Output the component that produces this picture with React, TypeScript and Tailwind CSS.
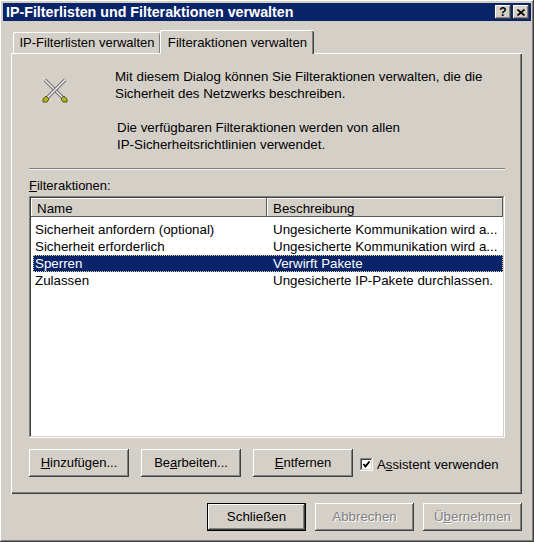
import React from 'react';

const raised = 'shadow-[inset_-1px_-1px_0_#404040,inset_1px_1px_0_#ffffff,inset_-2px_-2px_0_#808080,inset_2px_2px_0_#d4d0c8]';
const sunken = 'shadow-[inset_-1px_-1px_0_#ffffff,inset_1px_1px_0_#808080,inset_-2px_-2px_0_#d4d0c8,inset_2px_2px_0_#404040]';
const headerCell = 'shadow-[inset_-1px_-1px_0_#5a5a5a,inset_1px_1px_0_#ffffff]';

function SwordsIcon() {
  return (
    <svg width="32" height="32" viewBox="0 0 32 32" className="block">
      <g fill="none">
        <path d="M5 2 L23 20" stroke="#6b6b6b" strokeWidth="3.4" />
        <path d="M5 2 L23 20" stroke="#f4f4f4" strokeWidth="1.4" />
        <path d="M25 2 L7 20" stroke="#6b6b6b" strokeWidth="3.4" />
        <path d="M25 2 L7 20" stroke="#f4f4f4" strokeWidth="1.4" />
      </g>
      <path d="M6 18 L9 21 L7 24 L3 24 L3 21 Z" fill="#b4b41e" stroke="#3c3c10" strokeWidth="0.8" />
      <path d="M24 18 L21 21 L23 24 L27 24 L27 21 Z" fill="#b4b41e" stroke="#3c3c10" strokeWidth="0.8" />
      <path d="M0 21 H1 M11 22 H12 M18 22 H19 M29 21 H30" stroke="#e8e4a8" strokeWidth="1" />
    </svg>
  );
}

function Btn({ children, disabled, isDefault, w = 'w-[100px]', h = 'h-[28px]', text = 'text-[13px]' }: { children: React.ReactNode; disabled?: boolean; isDefault?: boolean; w?: string; h?: string; text?: string }) {
  return (
    <button
      className={`${w} ${h} flex items-center justify-center bg-[#d4d0c8] ${text} ${raised} ${disabled ? 'text-[#808080] [text-shadow:1px_1px_0_#ffffff]' : 'text-black'} ${isDefault ? 'border border-black' : ''}`}
    >
      <span>{children}</span>
    </button>
  );
}

function Row({ name, desc, selected }: { name: string; desc: string; selected?: boolean }) {
  return (
    <div className={`flex h-[17px] items-center leading-none ${selected ? 'bg-[#0a246a] text-white outline-1 -outline-offset-1 outline-dotted outline-[#d4d0a0]' : 'text-black'}`}>
      <div className="w-[240px] pl-[2px]">{name}</div>
      <div className="whitespace-nowrap">{desc}</div>
    </div>
  );
}

export default function App() {
  return (
    <div className={`flex h-[542px] w-[534px] flex-col bg-[#d4d0c8] p-[3px] font-['Liberation_Sans',Arial,sans-serif] text-[13px] text-black ${raised}`}>
      <div className="flex h-[18px] shrink-0 items-center justify-between bg-[#0a246a] pl-[3px] pr-[2px]">
        <span className="whitespace-nowrap pt-px text-[14.25px] font-bold text-white">IP-Filterlisten und Filteraktionen verwalten</span>
        <div className="flex">
          <div className={`flex h-[14px] w-[16px] items-center justify-center bg-[#d4d0c8] text-[12px] font-bold leading-none ${raised}`}>?</div>
          <div className={`ml-[2px] flex h-[14px] w-[16px] items-center justify-center bg-[#d4d0c8] ${raised}`}>
            <svg width="8" height="7" viewBox="0 0 8 7"><path d="M0.5 0.5 L7.5 6.5 M7.5 0.5 L0.5 6.5" stroke="#000" strokeWidth="1.6" /></svg>
          </div>
        </div>
      </div>

      <div className="ml-[10px] mt-[9px] flex h-[23px] shrink-0 items-end">
        <div className="flex h-[21px] w-[147px] items-center justify-center rounded-t-[2px] border-l border-t border-white shadow-[inset_-1px_0_0_#808080] whitespace-nowrap">IP-Filterlisten verwalten</div>
        <div className="relative z-10 -mb-px flex h-[24px] w-[154px] items-center justify-center rounded-t-[2px] border-l border-t border-white bg-[#d4d0c8] text-[13.2px] shadow-[inset_-1px_0_0_#404040,inset_-2px_0_0_#808080] whitespace-nowrap">Filteraktionen verwalten</div>
      </div>

      <div className="ml-[8px] mr-[9px] flex h-[441px] shrink-0 flex-col border-l border-t border-white px-[17px] shadow-[inset_-1px_-1px_0_#404040,inset_-2px_-2px_0_#808080]">
        <div className="flex pt-[15px]">
          <div className="ml-[11px] w-[75px] shrink-0 pt-[9px]"><SwordsIcon /></div>
          <div className="text-[13.33px] leading-[16.5px]">
            <p>Mit diesem Dialog können Sie Filteraktionen verwalten, die die</p>
            <p>Sicherheit des Netzwerks beschreiben.</p>
            <p className="ml-[2px] mt-[18px]">Die verfügbaren Filteraktionen werden von allen</p>
            <p className="ml-[2px]">IP-Sicherheitsrichtlinien verwendet.</p>
          </div>
        </div>

        <div className="mt-[15px] h-[2px] w-[476px] border-t border-[#808080] bg-white/70" />

        <div className="mt-[8px] h-[16px] leading-[16px]"><span className="underline">F</span>ilteraktionen:</div>

        <div className={`mt-[2px] h-[242px] w-[476px] bg-white ${sunken}`}>
          <div className="flex p-[2px]">
            <div className={`flex h-[19px] w-[236px] items-center bg-[#d4d0c8] pl-[6px] pt-[2px] text-[13.33px] ${headerCell}`}>Name</div>
            <div className={`flex h-[19px] flex-1 items-center bg-[#d4d0c8] pl-[6px] pt-[2px] text-[13.33px] ${headerCell}`}>Beschreibung</div>
          </div>
          <div className="mx-[2px] mt-[2px] pl-[2px] text-[13.33px]">
            <Row name="Sicherheit anfordern (optional)" desc="Ungesicherte Kommunikation wird a..." />
            <Row name="Sicherheit erforderlich" desc="Ungesicherte Kommunikation wird a..." />
            <Row name="Sperren" desc="Verwirft Pakete" selected />
            <Row name="Zulassen" desc="Ungesicherte IP-Pakete durchlassen." />
          </div>
        </div>

        <div className="mt-[11px] flex items-center">
          <Btn><span className="underline">H</span>inzufügen...</Btn>
          <div className="ml-[12px]"><Btn>Be<span className="underline">a</span>rbeiten...</Btn></div>
          <div className="ml-[12px]"><Btn><span className="underline">E</span>ntfernen</Btn></div>
          <div className="ml-[7px] mt-[3px] flex items-center">
            <div className={`flex h-[13px] w-[13px] items-center justify-center bg-white ${sunken}`}>
              <svg width="9" height="9" viewBox="0 0 9 9"><path d="M1.5 4 L3.5 6.5 L7.5 1.5" fill="none" stroke="#000" strokeWidth="2" /></svg>
            </div>
            <span className="ml-[4px] whitespace-nowrap text-[13.2px]">A<span className="underline">s</span>sistent verwenden</span>
          </div>
        </div>
      </div>

      <div className="mr-[9px] mt-[9px] flex justify-end gap-[9px]">
        <Btn isDefault w="w-[99px]" text="text-[13.33px]">Schließen</Btn>
        <Btn disabled w="w-[99px]" text="text-[13.33px]">Abbrechen</Btn>
        <Btn disabled w="w-[99px]" text="text-[13.33px]">Ü<span className="underline">b</span>ernehmen</Btn>
      </div>
    </div>
  );
}
